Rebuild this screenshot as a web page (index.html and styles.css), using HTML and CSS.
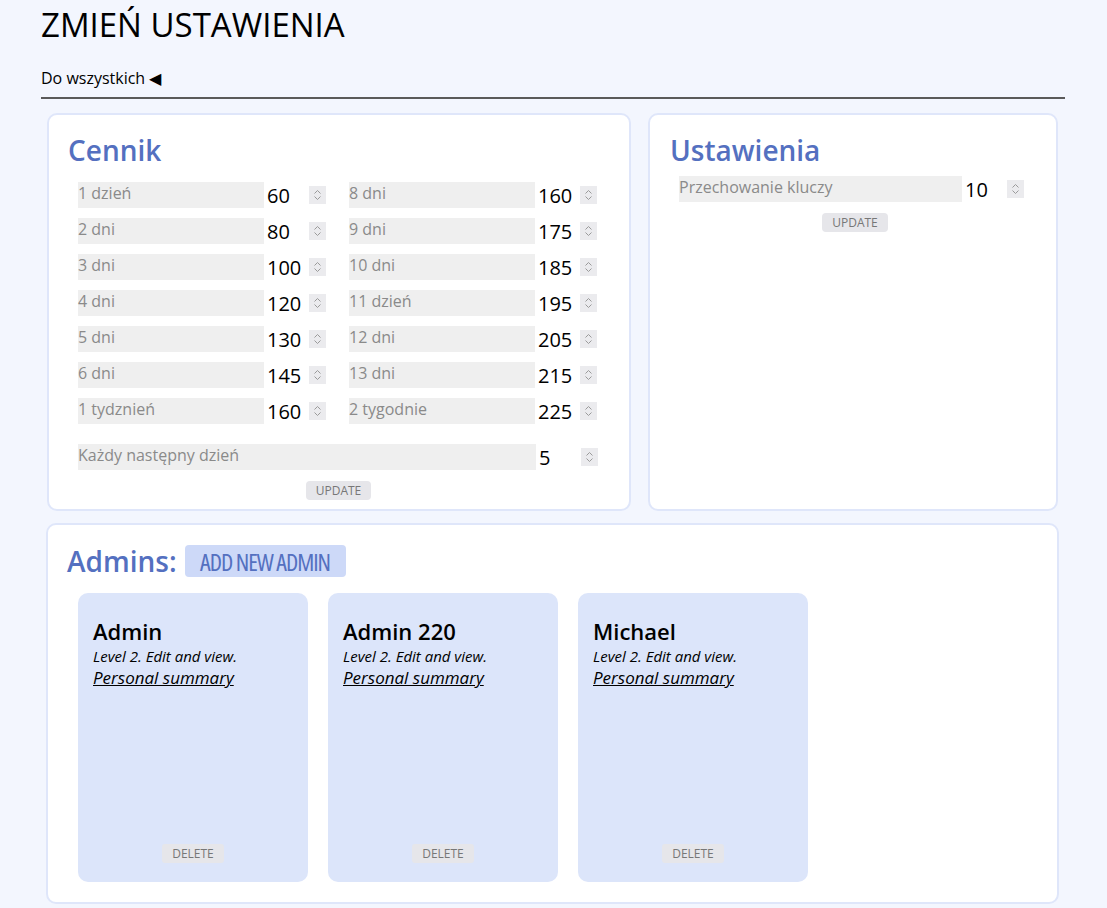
FILE: index.html
```html
<!DOCTYPE html>
<html lang="pl">
<head>
<meta charset="utf-8">
<title>Zmień ustawienia</title>
<link rel="stylesheet" href="styles.css">
</head>
<body>
<div class="page">
  <h1 class="title">ZMIEŃ USTAWIENIA</h1>
  <div class="back">Do wszystkich ◀</div>
  <hr class="rule">

  <div class="top-row">
    <section class="panel cennik">
      <h2 class="panel-title">Cennik</h2>
      <div class="price-grid">
        <div class="field"><span class="lbl">1 dzień</span><span class="val">60</span><span class="spin"><svg viewBox="0 0 17 18" width="17" height="18"><path d="M5.5 7.5 L8.5 4.5 L11.5 7.5 M5.5 10.5 L8.5 13.5 L11.5 10.5" fill="none" stroke="#9a9a9a" stroke-width="1"/></svg></span></div>
        <div class="field"><span class="lbl">8 dni</span><span class="val">160</span><span class="spin"><svg viewBox="0 0 17 18" width="17" height="18"><path d="M5.5 7.5 L8.5 4.5 L11.5 7.5 M5.5 10.5 L8.5 13.5 L11.5 10.5" fill="none" stroke="#9a9a9a" stroke-width="1"/></svg></span></div>
        <div class="field"><span class="lbl">2 dni</span><span class="val">80</span><span class="spin"><svg viewBox="0 0 17 18" width="17" height="18"><path d="M5.5 7.5 L8.5 4.5 L11.5 7.5 M5.5 10.5 L8.5 13.5 L11.5 10.5" fill="none" stroke="#9a9a9a" stroke-width="1"/></svg></span></div>
        <div class="field"><span class="lbl">9 dni</span><span class="val">175</span><span class="spin"><svg viewBox="0 0 17 18" width="17" height="18"><path d="M5.5 7.5 L8.5 4.5 L11.5 7.5 M5.5 10.5 L8.5 13.5 L11.5 10.5" fill="none" stroke="#9a9a9a" stroke-width="1"/></svg></span></div>
        <div class="field"><span class="lbl">3 dni</span><span class="val">100</span><span class="spin"><svg viewBox="0 0 17 18" width="17" height="18"><path d="M5.5 7.5 L8.5 4.5 L11.5 7.5 M5.5 10.5 L8.5 13.5 L11.5 10.5" fill="none" stroke="#9a9a9a" stroke-width="1"/></svg></span></div>
        <div class="field"><span class="lbl">10 dni</span><span class="val">185</span><span class="spin"><svg viewBox="0 0 17 18" width="17" height="18"><path d="M5.5 7.5 L8.5 4.5 L11.5 7.5 M5.5 10.5 L8.5 13.5 L11.5 10.5" fill="none" stroke="#9a9a9a" stroke-width="1"/></svg></span></div>
        <div class="field"><span class="lbl">4 dni</span><span class="val">120</span><span class="spin"><svg viewBox="0 0 17 18" width="17" height="18"><path d="M5.5 7.5 L8.5 4.5 L11.5 7.5 M5.5 10.5 L8.5 13.5 L11.5 10.5" fill="none" stroke="#9a9a9a" stroke-width="1"/></svg></span></div>
        <div class="field"><span class="lbl">11 dzień</span><span class="val">195</span><span class="spin"><svg viewBox="0 0 17 18" width="17" height="18"><path d="M5.5 7.5 L8.5 4.5 L11.5 7.5 M5.5 10.5 L8.5 13.5 L11.5 10.5" fill="none" stroke="#9a9a9a" stroke-width="1"/></svg></span></div>
        <div class="field"><span class="lbl">5 dni</span><span class="val">130</span><span class="spin"><svg viewBox="0 0 17 18" width="17" height="18"><path d="M5.5 7.5 L8.5 4.5 L11.5 7.5 M5.5 10.5 L8.5 13.5 L11.5 10.5" fill="none" stroke="#9a9a9a" stroke-width="1"/></svg></span></div>
        <div class="field"><span class="lbl">12 dni</span><span class="val">205</span><span class="spin"><svg viewBox="0 0 17 18" width="17" height="18"><path d="M5.5 7.5 L8.5 4.5 L11.5 7.5 M5.5 10.5 L8.5 13.5 L11.5 10.5" fill="none" stroke="#9a9a9a" stroke-width="1"/></svg></span></div>
        <div class="field"><span class="lbl">6 dni</span><span class="val">145</span><span class="spin"><svg viewBox="0 0 17 18" width="17" height="18"><path d="M5.5 7.5 L8.5 4.5 L11.5 7.5 M5.5 10.5 L8.5 13.5 L11.5 10.5" fill="none" stroke="#9a9a9a" stroke-width="1"/></svg></span></div>
        <div class="field"><span class="lbl">13 dni</span><span class="val">215</span><span class="spin"><svg viewBox="0 0 17 18" width="17" height="18"><path d="M5.5 7.5 L8.5 4.5 L11.5 7.5 M5.5 10.5 L8.5 13.5 L11.5 10.5" fill="none" stroke="#9a9a9a" stroke-width="1"/></svg></span></div>
        <div class="field"><span class="lbl">1 tydznień</span><span class="val">160</span><span class="spin"><svg viewBox="0 0 17 18" width="17" height="18"><path d="M5.5 7.5 L8.5 4.5 L11.5 7.5 M5.5 10.5 L8.5 13.5 L11.5 10.5" fill="none" stroke="#9a9a9a" stroke-width="1"/></svg></span></div>
        <div class="field"><span class="lbl">2 tygodnie</span><span class="val">225</span><span class="spin"><svg viewBox="0 0 17 18" width="17" height="18"><path d="M5.5 7.5 L8.5 4.5 L11.5 7.5 M5.5 10.5 L8.5 13.5 L11.5 10.5" fill="none" stroke="#9a9a9a" stroke-width="1"/></svg></span></div>
      </div>
      <div class="field wide"><span class="lbl">Każdy następny dzień</span><span class="val">5</span><span class="spin"><svg viewBox="0 0 17 18" width="17" height="18"><path d="M5.5 7.5 L8.5 4.5 L11.5 7.5 M5.5 10.5 L8.5 13.5 L11.5 10.5" fill="none" stroke="#9a9a9a" stroke-width="1"/></svg></span></div>
      <div class="btn-row"><button class="btn-small">UPDATE</button></div>
    </section>

    <section class="panel ustawienia">
      <h2 class="panel-title">Ustawienia</h2>
      <div class="field settings"><span class="lbl">Przechowanie kluczy</span><span class="val">10</span><span class="spin"><svg viewBox="0 0 17 18" width="17" height="18"><path d="M5.5 7.5 L8.5 4.5 L11.5 7.5 M5.5 10.5 L8.5 13.5 L11.5 10.5" fill="none" stroke="#9a9a9a" stroke-width="1"/></svg></span></div>
      <div class="btn-row tight"><button class="btn-small">UPDATE</button></div>
    </section>
  </div>

  <section class="panel admins">
    <div class="admins-head">
      <h2 class="panel-title">Admins:</h2>
      <button class="btn-add">ADD NEW ADMIN</button>
    </div>
    <div class="cards">
      <div class="card">
        <div class="card-name">Admin</div>
        <div class="card-level">Level 2. Edit and view.</div>
        <a class="card-link">Personal summary</a>
        <div class="card-foot"><button class="btn-small del">DELETE</button></div>
      </div>
      <div class="card">
        <div class="card-name">Admin 220</div>
        <div class="card-level">Level 2. Edit and view.</div>
        <a class="card-link">Personal summary</a>
        <div class="card-foot"><button class="btn-small del">DELETE</button></div>
      </div>
      <div class="card">
        <div class="card-name">Michael</div>
        <div class="card-level">Level 2. Edit and view.</div>
        <a class="card-link">Personal summary</a>
        <div class="card-foot"><button class="btn-small del">DELETE</button></div>
      </div>
    </div>
  </section>
</div>
</body>
</html>
```

FILE: styles.css
```css
* { box-sizing: border-box; }
html, body { margin: 0; padding: 0; }
body {
  background: #f3f6fe;
  font-family: "Open Sans", "Noto Sans", sans-serif;
  color: #000;
}
.page {
  width: 1024px;
  margin: 0 0 0 41px;
  padding-top: 3px;
}
.title {
  margin: 0;
  font-size: 33px;
  font-weight: 500;
  line-height: 44px;
}
.back {
  margin-top: 20px;
  font-size: 16px;
  line-height: 22px;
}
.rule {
  margin: 8px 0 0;
  border: 0;
  border-top: 2px solid #5a5a5a;
  height: 0;
}
.top-row {
  display: flex;
  gap: 17px;
  padding: 14px 7px 0 6px;
}
.panel {
  background: #fff;
  border: 2px solid #dfe6fa;
  border-radius: 10px;
}
.panel-title {
  margin: 0;
  font-size: 28px;
  font-weight: 600;
  color: #5470c0;
  line-height: 36px;
}
.cennik {
  flex: none;
  width: 584px;
  height: 398px;
  padding: 17px 0 0 19px;
}
.ustawienia {
  flex: none;
  width: 410px;
  height: 398px;
  padding: 17px 0 0 20px;
}
.price-grid {
  margin-top: 14px;
  padding-left: 10px;
  display: grid;
  grid-template-columns: 271px 250px;
  row-gap: 10px;
}
.field {
  display: flex;
  align-items: flex-start;
  height: 26px;
}
.lbl {
  flex: none;
  display: block;
  width: 186px;
  height: 26px;
  background: #efefef;
  color: #8a8a8a;
  font-size: 16px;
  line-height: 22px;
}
.val {
  flex: none;
  display: block;
  width: 45px;
  padding-left: 3px;
  font-size: 20px;
  line-height: 28px;
}
.spin {
  flex: none;
  display: block;
  width: 17px;
  height: 18px;
  background: #ebebee;
  margin-top: 4px;
}
.spin svg { display: block; }
.field.wide {
  margin: 20px 0 0 10px;
}
.field.wide .lbl { width: 458px; }
.btn-row {
  display: flex;
  justify-content: center;
  width: 541px;
  margin-top: 11px;
}
.btn-small {
  font-family: "Open Sans", "Noto Sans", sans-serif;
  font-size: 12px;
  color: #777;
  background: #e6e6ea;
  border: 0;
  border-radius: 4px;
  height: 19px;
  line-height: 19px;
  padding: 0 10px;
}
.field.settings {
  margin: 8px 0 0 9px;
}
.field.settings .lbl { width: 283px; }
.btn-row.tight {
  width: 390px;
  margin-top: 11px;
  padding-right: 20px;
}
.admins {
  margin: 12px 6px 0 5px;
  height: 381px;
  padding: 18px 0 0 19px;
}
.admins-head {
  display: flex;
  align-items: center;
  gap: 8px;
}
.btn-add {
  font-family: "Open Sans", sans-serif;
  font-stretch: 75%;
  font-size: 24px;
  font-weight: 400;
  color: #5470c0;
  background: #cdd9f8;
  border: 0;
  border-radius: 4px;
  height: 32px;
  width: 161px;
  padding: 0;
  letter-spacing: -1px;
}
.cards {
  display: flex;
  gap: 20px;
  padding-left: 11px;
  margin-top: 14px;
}
.card {
  width: 230px;
  height: 289px;
  background: #dce5fa;
  border-radius: 10px;
  padding: 23px 15px 19px 15px;
  display: flex;
  flex-direction: column;
}
.card-name {
  font-size: 22px;
  font-weight: 600;
  line-height: 30px;
}
.card-level {
  font-size: 15px;
  font-style: italic;
  line-height: 20px;
}
.card-link {
  font-size: 17px;
  font-style: italic;
  text-decoration: underline;
  line-height: 24px;
  color: #000;
}
.card-foot {
  margin-top: auto;
  display: flex;
  justify-content: center;
}
.btn-small.del {
  border-radius: 3px;
  padding: 0 10px;
}
```
